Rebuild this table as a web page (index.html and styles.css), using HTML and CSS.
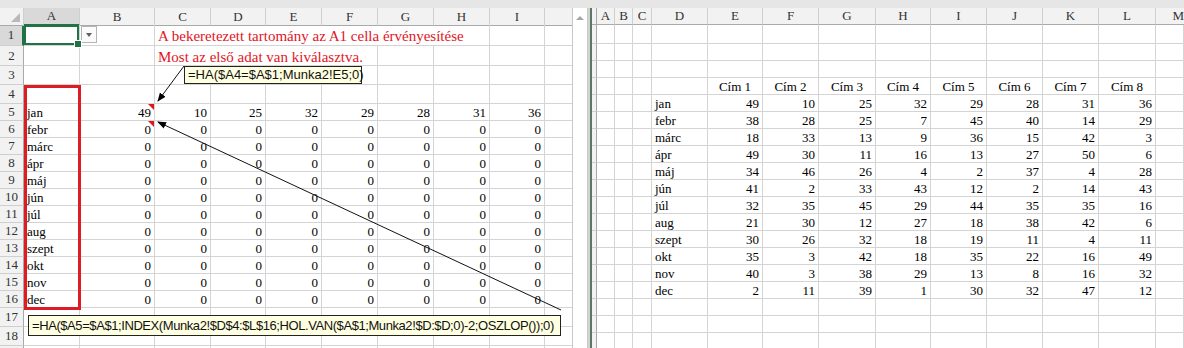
FILE: index.html
```html
<!DOCTYPE html>
<html lang="hu">
<head>
<meta charset="utf-8">
<title>Excel</title>
<link rel="stylesheet" href="styles.css">
</head>
<body>
<div class="top"></div>
<div class="panes">
  <div class="win-left">
    <div class="sheet sheet-left">
      <div class="row hrow"><div class="corner"></div><div class="h hsel">A</div><div class="h">B</div><div class="h">C</div><div class="h">D</div><div class="h">E</div><div class="h">F</div><div class="h">G</div><div class="h">H</div><div class="h">I</div><div class="h"></div></div>
      <div class="row h21"><div class="rh rsel">1</div><div class="c sel"></div><div class="c ddcell"><div class="dd"></div></div><div class="c title span6">A bekeretezett tartomány az A1 cella érvényesítése</div><div class="c"></div><div class="c"></div></div>
      <div class="row h20"><div class="rh">2</div><div class="c"></div><div class="c"></div><div class="c title title2 span4">Most az első adat van kiválasztva.</div><div class="c"></div><div class="c"></div><div class="c"></div><div class="c"></div></div>
      <div class="row h19"><div class="rh">3</div><div class="c"></div><div class="c"></div><div class="c"></div><div class="c"></div><div class="c"></div><div class="c"></div><div class="c"></div><div class="c"></div><div class="c"></div><div class="c"></div></div>
      <div class="row h19"><div class="rh">4</div><div class="c"></div><div class="c"></div><div class="c"></div><div class="c"></div><div class="c"></div><div class="c"></div><div class="c"></div><div class="c"></div><div class="c"></div><div class="c"></div></div>
      <div class="row h17"><div class="rh">5</div><div class="c">jan</div><div class="c n cm">49</div><div class="c n">10</div><div class="c n">25</div><div class="c n">32</div><div class="c n">29</div><div class="c n">28</div><div class="c n">31</div><div class="c n">36</div><div class="c"></div></div>
      <div class="row h17"><div class="rh">6</div><div class="c">febr</div><div class="c n cm">0</div><div class="c n">0</div><div class="c n">0</div><div class="c n">0</div><div class="c n">0</div><div class="c n">0</div><div class="c n">0</div><div class="c n">0</div><div class="c"></div></div>
      <div class="row h17"><div class="rh">7</div><div class="c">márc</div><div class="c n">0</div><div class="c n">0</div><div class="c n">0</div><div class="c n">0</div><div class="c n">0</div><div class="c n">0</div><div class="c n">0</div><div class="c n">0</div><div class="c"></div></div>
      <div class="row h17"><div class="rh">8</div><div class="c">ápr</div><div class="c n">0</div><div class="c n">0</div><div class="c n">0</div><div class="c n">0</div><div class="c n">0</div><div class="c n">0</div><div class="c n">0</div><div class="c n">0</div><div class="c"></div></div>
      <div class="row h17"><div class="rh">9</div><div class="c">máj</div><div class="c n">0</div><div class="c n">0</div><div class="c n">0</div><div class="c n">0</div><div class="c n">0</div><div class="c n">0</div><div class="c n">0</div><div class="c n">0</div><div class="c"></div></div>
      <div class="row h17"><div class="rh">10</div><div class="c">jún</div><div class="c n">0</div><div class="c n">0</div><div class="c n">0</div><div class="c n">0</div><div class="c n">0</div><div class="c n">0</div><div class="c n">0</div><div class="c n">0</div><div class="c"></div></div>
      <div class="row h17"><div class="rh">11</div><div class="c">júl</div><div class="c n">0</div><div class="c n">0</div><div class="c n">0</div><div class="c n">0</div><div class="c n">0</div><div class="c n">0</div><div class="c n">0</div><div class="c n">0</div><div class="c"></div></div>
      <div class="row h17"><div class="rh">12</div><div class="c">aug</div><div class="c n">0</div><div class="c n">0</div><div class="c n">0</div><div class="c n">0</div><div class="c n">0</div><div class="c n">0</div><div class="c n">0</div><div class="c n">0</div><div class="c"></div></div>
      <div class="row h17"><div class="rh">13</div><div class="c">szept</div><div class="c n">0</div><div class="c n">0</div><div class="c n">0</div><div class="c n">0</div><div class="c n">0</div><div class="c n">0</div><div class="c n">0</div><div class="c n">0</div><div class="c"></div></div>
      <div class="row h17"><div class="rh">14</div><div class="c">okt</div><div class="c n">0</div><div class="c n">0</div><div class="c n">0</div><div class="c n">0</div><div class="c n">0</div><div class="c n">0</div><div class="c n">0</div><div class="c n">0</div><div class="c"></div></div>
      <div class="row h17"><div class="rh">15</div><div class="c">nov</div><div class="c n">0</div><div class="c n">0</div><div class="c n">0</div><div class="c n">0</div><div class="c n">0</div><div class="c n">0</div><div class="c n">0</div><div class="c n">0</div><div class="c"></div></div>
      <div class="row h17"><div class="rh">16</div><div class="c">dec</div><div class="c n">0</div><div class="c n">0</div><div class="c n">0</div><div class="c n">0</div><div class="c n">0</div><div class="c n">0</div><div class="c n">0</div><div class="c n">0</div><div class="c"></div></div>
      <div class="row h19"><div class="rh">17</div><div class="c"></div><div class="c"></div><div class="c"></div><div class="c"></div><div class="c"></div><div class="c"></div><div class="c"></div><div class="c"></div><div class="c"></div><div class="c"></div></div>
      <div class="row h19"><div class="rh">18</div><div class="c"></div><div class="c"></div><div class="c"></div><div class="c"></div><div class="c"></div><div class="c"></div><div class="c"></div><div class="c"></div><div class="c"></div><div class="c"></div></div>
      <div class="row h19"><div class="rh"></div><div class="c"></div><div class="c"></div><div class="c"></div><div class="c"></div><div class="c"></div><div class="c"></div><div class="c"></div><div class="c"></div><div class="c"></div><div class="c"></div></div>
      <div class="range"></div>
    </div>
    <div class="vscroll"><div class="sbtn"></div></div>
  </div>
  <div class="divider"></div>
  <div class="sheet sheet-right">
    <div class="row hrow"><div class="stub shead"></div><div class="h">A</div><div class="h">B</div><div class="h">C</div><div class="h">D</div><div class="h">E</div><div class="h">F</div><div class="h">G</div><div class="h">H</div><div class="h">I</div><div class="h">J</div><div class="h">K</div><div class="h">L</div><div class="h hm">M</div></div>
    <div class="row h19"><div class="stub"></div><div class="c"></div><div class="c"></div><div class="c"></div><div class="c"></div><div class="c"></div><div class="c"></div><div class="c"></div><div class="c"></div><div class="c"></div><div class="c"></div><div class="c"></div><div class="c"></div><div class="c"></div></div>
    <div class="row h17"><div class="stub"></div><div class="c"></div><div class="c"></div><div class="c"></div><div class="c"></div><div class="c"></div><div class="c"></div><div class="c"></div><div class="c"></div><div class="c"></div><div class="c"></div><div class="c"></div><div class="c"></div><div class="c"></div></div>
    <div class="row h17"><div class="stub"></div><div class="c"></div><div class="c"></div><div class="c"></div><div class="c"></div><div class="c"></div><div class="c"></div><div class="c"></div><div class="c"></div><div class="c"></div><div class="c"></div><div class="c"></div><div class="c"></div><div class="c"></div></div>
    <div class="row h17"><div class="stub"></div><div class="c"></div><div class="c"></div><div class="c"></div><div class="c"></div><div class="c ctr">Cím 1</div><div class="c ctr">Cím 2</div><div class="c ctr">Cím 3</div><div class="c ctr">Cím 4</div><div class="c ctr">Cím 5</div><div class="c ctr">Cím 6</div><div class="c ctr">Cím 7</div><div class="c ctr">Cím 8</div><div class="c"></div></div>
    <div class="row h17"><div class="stub"></div><div class="c"></div><div class="c"></div><div class="c"></div><div class="c">jan</div><div class="c n">49</div><div class="c n">10</div><div class="c n">25</div><div class="c n">32</div><div class="c n">29</div><div class="c n">28</div><div class="c n">31</div><div class="c n">36</div><div class="c"></div></div>
    <div class="row h17"><div class="stub"></div><div class="c"></div><div class="c"></div><div class="c"></div><div class="c">febr</div><div class="c n">38</div><div class="c n">28</div><div class="c n">25</div><div class="c n">7</div><div class="c n">45</div><div class="c n">40</div><div class="c n">14</div><div class="c n">29</div><div class="c"></div></div>
    <div class="row h17"><div class="stub"></div><div class="c"></div><div class="c"></div><div class="c"></div><div class="c">márc</div><div class="c n">18</div><div class="c n">33</div><div class="c n">13</div><div class="c n">9</div><div class="c n">36</div><div class="c n">15</div><div class="c n">42</div><div class="c n">3</div><div class="c"></div></div>
    <div class="row h17"><div class="stub"></div><div class="c"></div><div class="c"></div><div class="c"></div><div class="c">ápr</div><div class="c n">49</div><div class="c n">30</div><div class="c n">11</div><div class="c n">16</div><div class="c n">13</div><div class="c n">27</div><div class="c n">50</div><div class="c n">6</div><div class="c"></div></div>
    <div class="row h17"><div class="stub"></div><div class="c"></div><div class="c"></div><div class="c"></div><div class="c">máj</div><div class="c n">34</div><div class="c n">46</div><div class="c n">26</div><div class="c n">4</div><div class="c n">2</div><div class="c n">37</div><div class="c n">4</div><div class="c n">28</div><div class="c"></div></div>
    <div class="row h17"><div class="stub"></div><div class="c"></div><div class="c"></div><div class="c"></div><div class="c">jún</div><div class="c n">41</div><div class="c n">2</div><div class="c n">33</div><div class="c n">43</div><div class="c n">12</div><div class="c n">2</div><div class="c n">14</div><div class="c n">43</div><div class="c"></div></div>
    <div class="row h17"><div class="stub"></div><div class="c"></div><div class="c"></div><div class="c"></div><div class="c">júl</div><div class="c n">32</div><div class="c n">35</div><div class="c n">45</div><div class="c n">29</div><div class="c n">44</div><div class="c n">35</div><div class="c n">35</div><div class="c n">16</div><div class="c"></div></div>
    <div class="row h17"><div class="stub"></div><div class="c"></div><div class="c"></div><div class="c"></div><div class="c">aug</div><div class="c n">21</div><div class="c n">30</div><div class="c n">12</div><div class="c n">27</div><div class="c n">18</div><div class="c n">38</div><div class="c n">42</div><div class="c n">6</div><div class="c"></div></div>
    <div class="row h17"><div class="stub"></div><div class="c"></div><div class="c"></div><div class="c"></div><div class="c">szept</div><div class="c n">30</div><div class="c n">26</div><div class="c n">32</div><div class="c n">18</div><div class="c n">19</div><div class="c n">11</div><div class="c n">4</div><div class="c n">11</div><div class="c"></div></div>
    <div class="row h17"><div class="stub"></div><div class="c"></div><div class="c"></div><div class="c"></div><div class="c">okt</div><div class="c n">35</div><div class="c n">3</div><div class="c n">42</div><div class="c n">18</div><div class="c n">35</div><div class="c n">22</div><div class="c n">16</div><div class="c n">49</div><div class="c"></div></div>
    <div class="row h17"><div class="stub"></div><div class="c"></div><div class="c"></div><div class="c"></div><div class="c">nov</div><div class="c n">40</div><div class="c n">3</div><div class="c n">38</div><div class="c n">29</div><div class="c n">13</div><div class="c n">8</div><div class="c n">16</div><div class="c n">32</div><div class="c"></div></div>
    <div class="row h17"><div class="stub"></div><div class="c"></div><div class="c"></div><div class="c"></div><div class="c">dec</div><div class="c n">2</div><div class="c n">11</div><div class="c n">39</div><div class="c n">1</div><div class="c n">30</div><div class="c n">32</div><div class="c n">47</div><div class="c n">12</div><div class="c"></div></div>
    <div class="row h17"><div class="stub"></div><div class="c"></div><div class="c"></div><div class="c"></div><div class="c"></div><div class="c"></div><div class="c"></div><div class="c"></div><div class="c"></div><div class="c"></div><div class="c"></div><div class="c"></div><div class="c"></div><div class="c"></div></div>
    <div class="row h17"><div class="stub"></div><div class="c"></div><div class="c"></div><div class="c"></div><div class="c"></div><div class="c"></div><div class="c"></div><div class="c"></div><div class="c"></div><div class="c"></div><div class="c"></div><div class="c"></div><div class="c"></div><div class="c"></div></div>
    <div class="row h17"><div class="stub"></div><div class="c"></div><div class="c"></div><div class="c"></div><div class="c"></div><div class="c"></div><div class="c"></div><div class="c"></div><div class="c"></div><div class="c"></div><div class="c"></div><div class="c"></div><div class="c"></div><div class="c"></div></div>
  </div>
</div>
<svg class="arrows" width="1184" height="348" viewBox="0 0 1184 348">
  <defs>
    <marker id="ah" markerWidth="9" markerHeight="8" refX="8" refY="4" orient="auto" markerUnits="userSpaceOnUse">
      <path d="M0,0.5 L9,4 L0,7.5 z" fill="#000"/>
    </marker>
  </defs>
  <line x1="184" y1="66" x2="158" y2="101" stroke="#111" stroke-width="1" marker-end="url(#ah)"/>
  <line x1="561" y1="310" x2="158" y2="122" stroke="#111" stroke-width="1" marker-end="url(#ah)"/>
</svg>
<div class="note note-top">=HA($A4=$A$1;Munka2!E5;0)</div>
<div class="note note-bottom">=HA($A5=$A$1;INDEX(Munka2!$D$4:$L$16;HOL.VAN($A$1;Munka2!$D:$D;0)-2;OSZLOP());0)</div>
</body>
</html>
```

FILE: styles.css
```css
* { box-sizing: border-box; }

body {
  margin: 0;
  width: 1184px;
  height: 348px;
  overflow: hidden;
  position: relative;
  background: #e6e6e6;
  font-family: "Liberation Serif", "Times New Roman", serif;
  font-size: 13px;
  color: #000;
}

.top { height: 8px; }

.panes {
  display: flex;
  height: 340px;
}

.win-left {
  display: flex;
  width: 588px;
}

.sheet {
  position: relative;
  overflow: hidden;
  background: #fff;
}

.sheet-left { width: 572px; }
.sheet-right { width: 592px; }

.row { display: grid; }
.sheet-left .row {
  grid-template-columns: 24px 56px 75px 56px 55px 56px 56px 56px 56px 55px 56px;
}
.sheet-right .row {
  grid-template-columns: 5px 18px 18px 19px 56px 55px 56px 57px 55px 56px 56px 56px 57px 28px;
}

.hrow { height: 17px; }
.h21 { height: 21px; }
.h20 { height: 20px; }
.h19 { height: 19px; }
.h17 { height: 17px; }

.c {
  position: relative;
  display: flex;
  align-items: flex-end;
  padding: 0 3px;
  line-height: 15px;
  white-space: nowrap;
  border-right: 1px solid #d4d4d4;
  border-bottom: 1px solid #d4d4d4;
}
.n { justify-content: flex-end; }
.ctr { justify-content: center; }

.h {
  display: flex;
  align-items: center;
  justify-content: center;
  background: #f2f2f2;
  color: #333;
  border-right: 1px solid #cfcfcf;
  border-bottom: 1px solid #a9a9a9;
  white-space: nowrap;
}
.hm {
  justify-content: flex-end;
  padding-right: 0;
  border-right: 0;
}
.hsel {
  background: #d9d9d9;
  border-bottom: 2px solid #217346;
}

.corner {
  position: relative;
  background: #f2f2f2;
  border-right: 1px solid #cfcfcf;
  border-bottom: 1px solid #a9a9a9;
}
.corner::after {
  content: "";
  position: absolute;
  right: 3px;
  bottom: 3px;
  border-left: 9px solid transparent;
  border-bottom: 9px solid #b9b9b9;
}

.rh {
  display: flex;
  align-items: center;
  justify-content: center;
  background: #f2f2f2;
  color: #333;
  border-right: 1px solid #a9a9a9;
  border-bottom: 1px solid #cfcfcf;
}
.rsel {
  background: #d9d9d9;
  border-right: 2px solid #217346;
}

.stub {
  background: #f2f2f2;
  border-right: 1px solid #a9a9a9;
  border-bottom: 1px solid #cfcfcf;
}
.shead { border-bottom: 1px solid #a9a9a9; }

.sel {
  box-shadow: inset 0 0 0 2px #217346;
  z-index: 2;
  overflow: visible;
}
.sel::after {
  content: "";
  position: absolute;
  right: -3px;
  bottom: -3px;
  width: 6px;
  height: 6px;
  background: #217346;
  border: 1px solid #fff;
}

.ddcell {
  align-items: flex-start;
  padding: 1px 0 0 1px;
}
.dd {
  position: relative;
  width: 16px;
  height: 17px;
  background: #fbfbfb;
  border: 1px solid #b4b4b4;
}
.dd::after {
  content: "";
  position: absolute;
  left: 4px;
  top: 6px;
  border-left: 3.5px solid transparent;
  border-right: 3.5px solid transparent;
  border-top: 4px solid #606060;
}

.title {
  color: #e3141e;
  font-size: 15px;
  line-height: 14px;
  padding-bottom: 2px;
}
.title2 { padding-bottom: 1px; }
.span6 { grid-column: span 6; }
.span4 { grid-column: span 4; }

.cm::before {
  content: "";
  position: absolute;
  top: 0;
  right: 0;
  border-left: 6px solid transparent;
  border-top: 6px solid #e3141e;
}

.range {
  position: absolute;
  left: 24px;
  top: 77px;
  width: 57px;
  height: 225px;
  border: 3px solid #dd1c24;
}

.vscroll {
  width: 16px;
  padding-top: 3px;
  background: #fff;
  border-left: 1px solid #c9c9c9;
  border-right: 1px solid #c9c9c9;
}
.sbtn {
  position: relative;
  height: 15px;
}
.sbtn::after {
  content: "";
  position: absolute;
  left: 3px;
  top: 5px;
  border-left: 4px solid transparent;
  border-right: 4px solid transparent;
  border-bottom: 4px solid #a6a6a6;
}

.divider {
  width: 4px;
  background: #d4d4d4;
  border-right: 2px solid #5d7762;
}

.arrows {
  position: absolute;
  left: 0;
  top: 0;
  pointer-events: none;
}

.note {
  position: absolute;
  background: #ffffe1;
  border: 1px solid #222;
  font-family: "Liberation Sans", Arial, sans-serif;
  font-size: 13px;
  color: #111;
  white-space: nowrap;
  padding: 0 3px;
}
.note-top {
  left: 184px;
  top: 66px;
  width: 178px;
  height: 18px;
  line-height: 16px;
}
.note-bottom {
  left: 28px;
  top: 315px;
  width: 533px;
  height: 21px;
  line-height: 19px;
  letter-spacing: -0.42px;
}
```
